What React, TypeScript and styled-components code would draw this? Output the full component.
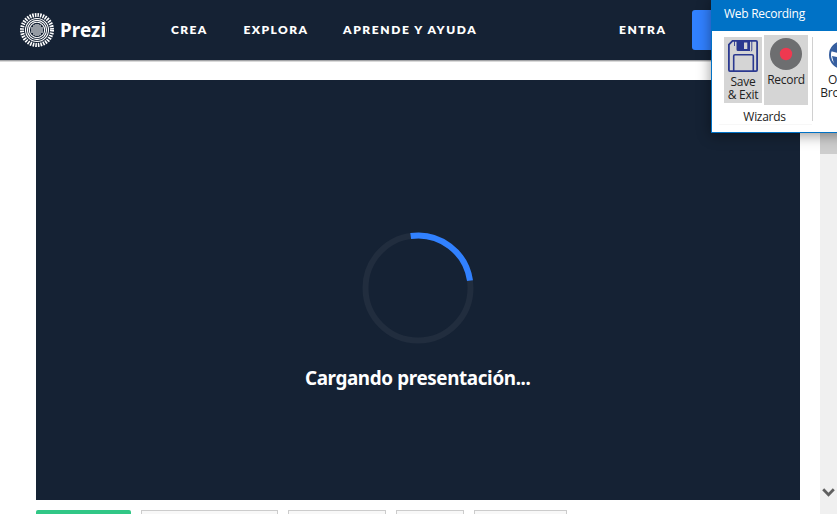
import React from 'react';
import styled, { createGlobalStyle } from 'styled-components';

const navy = '#152234';

const GlobalStyle = createGlobalStyle`
  * { box-sizing: border-box; }
  body { margin: 0; overflow: hidden; background: #fff; }
`;

const Screen = styled.div`
  position: relative;
  width: 837px;
  height: 514px;
  overflow: hidden;
  display: flex;
  flex-direction: column;
  background: #fff;
`;

const Header = styled.header`
  flex: none;
  height: 60px;
  display: flex;
  align-items: center;
  padding-left: 19px;
  background: ${navy};
  box-shadow: 0 1px 0 #a3a4a7, 0 2px 0 #d9d9d9;
  z-index: 1;
`;

const Brand = styled.a`
  display: flex;
  align-items: center;
  width: 152px;
`;

const BrandName = styled.span`
  margin-left: 5px;
  font: 700 20px/24px 'Noto Sans', sans-serif;
  letter-spacing: 0.1px;
  color: #fff;
  transform: scaleX(0.94);
  transform-origin: left;
`;

const NavLink = styled.a<{ $w: number; $spacing: number }>`
  flex: none;
  width: ${(p) => p.$w}px;
  font: 800 12px/20px Lato, sans-serif;
  letter-spacing: ${(p) => p.$spacing}px;
  white-space: nowrap;
  color: #fff;
`;

const SignUp = styled.div`
  flex: none;
  width: 120px;
  height: 40px;
  border-radius: 3px;
  background: #3181ff;
`;

const Body = styled.div`
  flex: none;
  height: 454px;
  display: flex;
  justify-content: space-between;
`;

const Content = styled.main`
  width: 800px;
  padding: 20px 0 0 36px;
`;

const Viewer = styled.section`
  height: 420px;
  display: flex;
  flex-direction: column;
  align-items: center;
  padding-top: 152px;
  background: ${navy};
`;

const Loading = styled.p`
  margin: 20px 0 0;
  font: 700 20px/28px 'Noto Sans', sans-serif;
  letter-spacing: -0.4px;
  white-space: nowrap;
  color: #fff;
  transform: scaleX(0.942);
`;

const Actions = styled.div`
  display: flex;
  gap: 10px;
  margin-top: 10px;
`;

const Action = styled.div<{ $w: number; $primary?: boolean }>`
  width: ${(p) => p.$w}px;
  height: 30px;
  border: ${(p) => (p.$primary ? '0' : '1px solid #ccc')};
  border-radius: ${(p) => (p.$primary ? 2 : 0)}px;
  background: ${(p) => (p.$primary ? '#31c786' : '#f8f8f8')};
`;

const Scrollbar = styled.div`
  width: 17px;
  display: flex;
  flex-direction: column;
  justify-content: space-between;
  align-items: center;
  padding-bottom: 16px;
  background: #f0f0f0;
`;

const Thumb = styled.div`
  width: 17px;
  height: 94px;
  background: #cdcdcd;
`;

const Recorder = styled.aside`
  position: absolute;
  left: 711px;
  top: -1px;
  width: 200px;
  height: 134px;
  border: 1px solid #0072c6;
  background: #fff;
  box-shadow: 0 2px 13px rgba(0, 0, 0, 0.42);
  z-index: 2;
  font: 12px/13px 'Open Sans', sans-serif;
  color: #222;
`;

const TitleBar = styled.div`
  height: 31px;
  padding: 5px 0 0 12px;
  background: #0072c6;
  color: #fff;
  line-height: 18px;
  letter-spacing: -0.28px;
`;

const Ribbon = styled.div`
  display: flex;
  padding: 4px 0 0 7px;
`;

const Group = styled.div`
  width: 93px;
  height: 90px;
  display: flex;
  flex-direction: column;
  border-bottom: 1px solid #f7f7f7;
`;

const Tools = styled.div`
  display: flex;
  gap: 2px;
  padding-left: 5px;
  height: 70px;
`;

const Tool = styled.div<{ $w: number; $h: number; $top: number; $pad: number }>`
  flex: none;
  width: ${(p) => p.$w}px;
  height: ${(p) => p.$h}px;
  margin-top: ${(p) => p.$top}px;
  padding-top: ${(p) => p.$pad}px;
  display: flex;
  flex-direction: column;
  align-items: center;
  background: #d5d5d5;
`;

const Label = styled.span<{ $spacing?: number; $gap?: number }>`
  margin-top: ${(p) => p.$gap ?? 0}px;
  text-align: center;
  white-space: nowrap;
  letter-spacing: ${(p) => p.$spacing ?? -0.3}px;
`;

const Wizards = styled(Label)`
  padding-right: 2px;
`;

const Divider = styled.div`
  width: 1px;
  height: 84px;
  margin-top: 2px;
  background: #d0d0d0;
`;

const BrowserTool = styled.div`
  width: 56px;
  padding-top: 6px;
  margin-left: 2px;
  display: flex;
  flex-direction: column;
  align-items: center;
`;

const PreziMark = () => (
  <svg width="36" height="36" viewBox="-18 -18 36 36" fill="none" stroke="#fff">
    <circle r="15" strokeWidth="4" strokeDasharray="1.571 1.0472" />
    <g strokeWidth="1.1">
      <circle r="11.5" />
      <circle r="9.6" />
      <circle r="7.7" />
    </g>
    <path d="M-5 -3v6M-3 -5.2v10.4M-1 -6v12M1 -6v12M3 -5.2v10.4M5 -3v6" strokeWidth="1.1" />
  </svg>
);

const Spinner = () => (
  <svg width="112" height="112" viewBox="-56 -56 112 112" fill="none" strokeWidth="6">
    <circle r="52.5" stroke="#212d3e" />
    <path d="M-7.3 -52A52.5 52.5 0 0 1 52 -7.3" stroke="#3181ff" />
  </svg>
);

const Floppy = () => (
  <svg width="30" height="32" viewBox="0 0 30 32" fill="none" stroke="#2b3990" strokeWidth="1.8">
    <path d="M4.5 .9H28a1.1 1.1 0 0 1 1.1 1.1V30a1.1 1.1 0 0 1-1.1 1.1H2A1.1 1.1 0 0 1 .9 30V4.5Z" />
    <path d="M5.7 31V16a1.3 1.3 0 0 1 1.3-1.3H24a1.3 1.3 0 0 1 1.3 1.3V31" strokeWidth="1.6" />
    <path d="M6.5 1V6M23.8 1V10a1 1 0 0 1-1 1" strokeWidth=".9" />
    <path d="M8.5 1H22V11H10a1.5 1.5 0 0 1-1.5-1.5ZM16 2.5V9H19.3V2.5Z" fill="#2b3990" fillRule="evenodd" stroke="none" />
  </svg>
);

const RecordIcon = () => (
  <svg width="32" height="32" viewBox="0 0 32 32">
    <circle cx="16" cy="16" r="16" fill="#6d6e70" />
    <circle cx="16" cy="16" r="6.2" fill="#ef3950" />
  </svg>
);

const Globe = () => (
  <svg width="28" height="28" viewBox="0 0 28 28">
    <circle cx="14" cy="14" r="13" fill="#fff" stroke="#355e9f" strokeWidth="2" />
    <path d="M1.5 10L6 4L14 1V8L10 9L9 12L5 11ZM3 15L8 16L12 21L11 27L5 23Z" fill="#355e9f" />
  </svg>
);

const Chevron = () => (
  <svg width="13" height="10" viewBox="0 0 13 10">
    <path d="M1.2 1.3L6.5 6.7L11.8 1.3" fill="none" stroke="#606060" strokeWidth="2.8" />
  </svg>
);

export default function App() {
  return (
    <Screen>
      <GlobalStyle />
      <Header>
        <Brand>
          <PreziMark />
          <BrandName>Prezi</BrandName>
        </Brand>
        <NavLink $w={72.5} $spacing={1.4}>CREA</NavLink>
        <NavLink $w={99.5} $spacing={1.4}>EXPLORA</NavLink>
        <NavLink $w={276} $spacing={1.6}>APRENDE Y AYUDA</NavLink>
        <NavLink $w={73} $spacing={1.5}>ENTRA</NavLink>
        <SignUp />
      </Header>
      <Body>
        <Content>
          <Viewer>
            <Spinner />
            <Loading>Cargando presentación...</Loading>
          </Viewer>
          <Actions>
            <Action $w={95} $primary />
            <Action $w={137} />
            <Action $w={98} />
            <Action $w={68} />
            <Action $w={93} />
          </Actions>
        </Content>
        <Scrollbar>
          <Thumb />
          <Chevron />
        </Scrollbar>
      </Body>
      <Recorder>
        <TitleBar>Web Recording</TitleBar>
        <Ribbon>
          <Group>
            <Tools>
              <Tool $w={38} $h={66} $top={2} $pad={3}>
                <Floppy />
                <Label $gap={3}>Save<br />&amp; Exit</Label>
              </Tool>
              <Tool $w={44} $h={70} $top={0} $pad={3}>
                <RecordIcon />
                <Label $gap={3}>Record</Label>
              </Tool>
            </Tools>
            <Wizards $gap={5}>Wizards</Wizards>
          </Group>
          <Divider />
          <BrowserTool>
            <Globe />
            <Label $gap={4} $spacing={-0.15}>Open<br />Browser</Label>
          </BrowserTool>
        </Ribbon>
      </Recorder>
    </Screen>
  );
}
